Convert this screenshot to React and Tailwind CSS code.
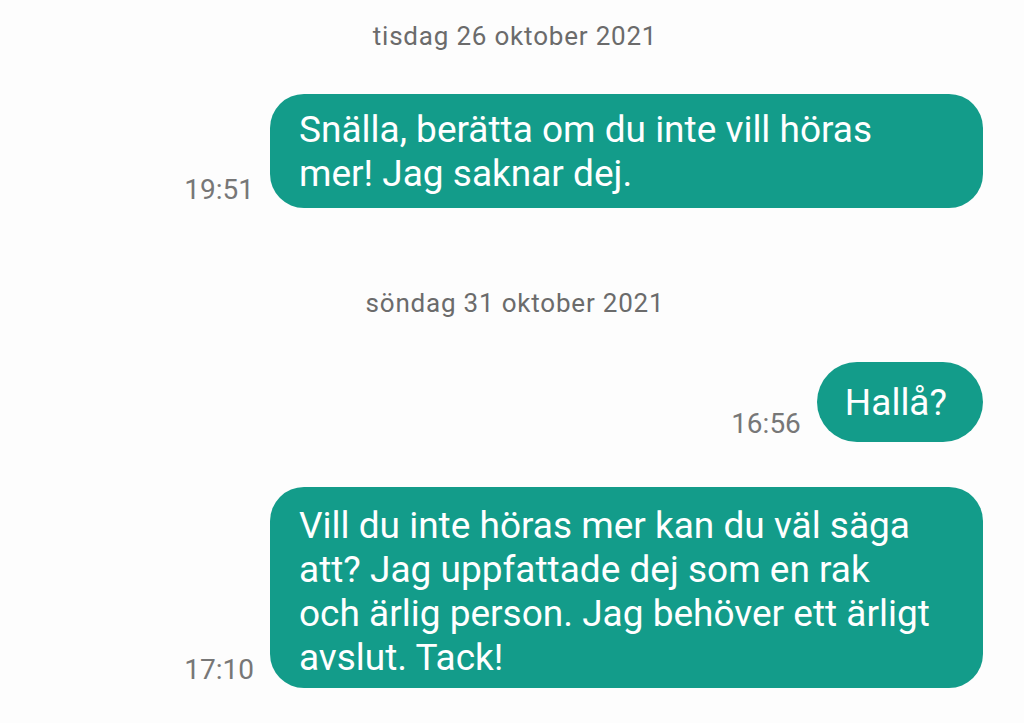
const Bubble = ({ time, children, className = "" }) => (
  <div className="flex justify-end items-end gap-[16px] pr-[41px]">
    <span className="text-[28px] leading-none text-[#777777] pb-[4px]">{time}</span>
    <div
      className={`bg-[#139c8a] text-white text-[37px] leading-[44px] whitespace-nowrap ${className}`}
    >
      {children}
    </div>
  </div>
);

const DateLabel = ({ children, className = "" }) => (
  <div className={`text-center text-[26px] leading-none tracking-[0.8px] text-[#6b6b6b] pl-[6px] ${className}`}>
    {children}
  </div>
);

export default function App() {
  return (
    <div
      className="w-[1024px] h-[723px] bg-[#fdfdfd] overflow-hidden"
      style={{ fontFamily: "Roboto, 'Noto Sans', sans-serif" }}
    >
      <DateLabel className="pt-[23px]">tisdag 26 oktober 2021</DateLabel>

      <div className="mt-[45px]">
        <Bubble time="19:51" className="w-[713px] rounded-[34px] pl-[29px] pt-[14px] pb-[12px]">
          Snälla, berätta om du inte vill höras
          <br />
          mer! Jag saknar dej.
        </Bubble>
      </div>

      <DateLabel className="mt-[82px]">söndag 31 oktober 2021</DateLabel>

      <div className="mt-[46px]">
        <Bubble time="16:56" className="rounded-full pl-[28px] pr-[36px] pt-[19px] pb-[17px]">
          Hallå?
        </Bubble>
      </div>

      <div className="mt-[45px]">
        <Bubble time="17:10" className="w-[713px] rounded-[34px] pl-[29px] pt-[17px] pb-[8px]">
          Vill du inte höras mer kan du väl säga
          <br />
          att? Jag uppfattade dej som en rak
          <br />
          och ärlig person. Jag behöver ett ärligt
          <br />
          avslut. Tack!
        </Bubble>
      </div>
    </div>
  );
}
